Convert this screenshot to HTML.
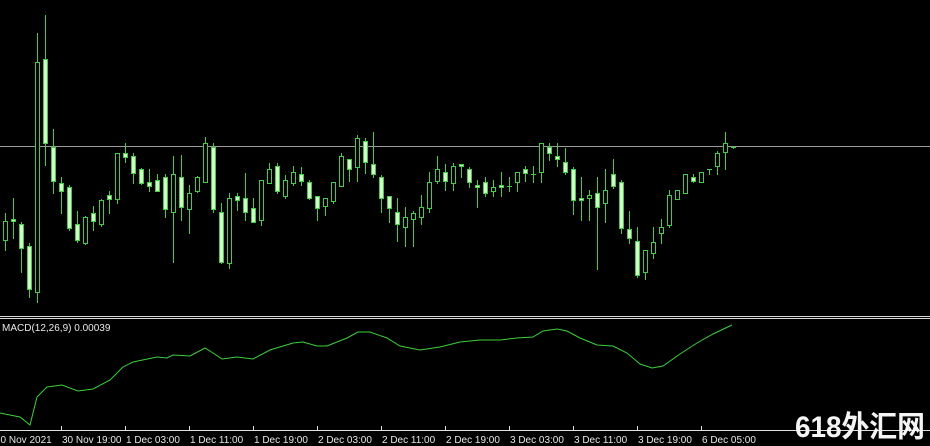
<!DOCTYPE html>
<html><head><meta charset="utf-8"><style>
html,body{margin:0;padding:0;background:#000;width:930px;height:446px;overflow:hidden}
svg{display:block}
.t{font-family:"Liberation Sans",sans-serif;font-size:10px;fill:#e8e8e8}
.wm{font-family:"Liberation Sans","Noto Sans CJK SC",sans-serif;font-size:30px;font-weight:bold;fill:#f4f4f4}
</style></head><body>
<svg id="s" width="930" height="446" viewBox="0 0 930 446" xmlns="http://www.w3.org/2000/svg" shape-rendering="crispEdges">
<rect width="930" height="446" fill="#000"/>
<line x1="0" y1="146.5" x2="930" y2="146.5" stroke="#9a9a9a"/>
<g id="c"></g>
<line x1="0" y1="316.5" x2="930" y2="316.5" stroke="#d8d8d8"/>
<line x1="0" y1="318.5" x2="930" y2="318.5" stroke="#d8d8d8"/>
<text class="t" x="2" y="331">MACD(12,26,9) 0.00039</text>
<polyline shape-rendering="auto" fill="none" stroke="#3ccf3c" stroke-width="1" points="0,413 20,417 30,425 37,397 47,387 62,385 78,391 93,389 110,380 123,367 133,362 157,357 167,358 173,355 190,356 205,348 213,353 222,359 237,357 253,359 270,350 293,343 303,342 317,346 327,346 347,338 358,332 370,332 387,338 400,346 420,350 440,347 460,342 480,340 500,340 517,338 533,337 543,331 557,329 567,331 580,338 597,345 613,346 627,353 640,364 652,368 663,366 680,354 697,343 713,334 732,325"/>
<line x1="0" y1="430.5" x2="930" y2="430.5" stroke="#e0e0e0"/>
<g stroke="#e0e0e0">
<line x1="61.5" y1="426" x2="61.5" y2="431"/><line x1="125.5" y1="426" x2="125.5" y2="431"/><line x1="189.5" y1="426" x2="189.5" y2="431"/><line x1="253.5" y1="426" x2="253.5" y2="431"/><line x1="317.5" y1="426" x2="317.5" y2="431"/><line x1="381.5" y1="426" x2="381.5" y2="431"/><line x1="445.5" y1="426" x2="445.5" y2="431"/><line x1="509.5" y1="426" x2="509.5" y2="431"/><line x1="573.5" y1="426" x2="573.5" y2="431"/><line x1="637.5" y1="426" x2="637.5" y2="431"/><line x1="701.5" y1="426" x2="701.5" y2="431"/>
</g>
<g class="t">
<text x="-5" y="443">30 Nov 2021</text>
<text x="62" y="443">30 Nov 19:00</text>
<text x="126" y="443">1 Dec 03:00</text>
<text x="190" y="443">1 Dec 11:00</text>
<text x="254" y="443">1 Dec 19:00</text>
<text x="318" y="443">2 Dec 03:00</text>
<text x="382" y="443">2 Dec 11:00</text>
<text x="446" y="443">2 Dec 19:00</text>
<text x="510" y="443">3 Dec 03:00</text>
<text x="574" y="443">3 Dec 11:00</text>
<text x="638" y="443">3 Dec 19:00</text>
<text x="702" y="443">6 Dec 05:00</text>
</g>
<text class="wm" x="795" y="437" textLength="130" lengthAdjust="spacingAndGlyphs">618外汇网</text>
</svg>
<script>
var d=[
[221,240,213,250,'u'],[219,221,198,238,'d'],[224,248,222,272,'d'],[246,289,243,297,'d'],[62,292,33,302,'u'],[59,143,15,165,'d'],[147,181,129,193,'d'],[183,191,177,213,'d'],[187,228,185,230,'d'],[224,240,211,242,'d'],
[217,243,216,244,'u'],[213,221,206,230,'d'],[200,224,199,226,'u'],[195,199,191,213,'d'],[153,199,153,203,'u'],[153,157,143,162,'d'],[156,173,153,183,'d'],[169,183,168,184,'d'],[182,186,169,191,'d'],[180,191,174,191,'d'],
[177,209,174,217,'d'],[174,212,156,262,'u'],[177,207,155,220,'d'],[193,209,185,233,'u'],[177,191,176,192,'u'],[143,182,137,182,'u'],[147,209,143,212,'d'],[212,262,203,263,'d'],[198,263,193,268,'u'],[196,200,193,210,'d'],
[198,212,173,220,'d'],[208,222,198,222,'d'],[180,220,180,225,'u'],[169,183,163,183,'u'],[166,191,163,193,'d'],[180,196,175,198,'u'],[172,183,166,185,'u'],[174,181,167,185,'d'],[182,198,180,199,'d'],[196,208,196,220,'d'],
[198,206,198,215,'u'],[182,201,182,203,'u'],[156,186,153,186,'u'],[159,169,159,181,'d'],[138,167,135,181,'u'],[141,162,138,173,'d'],[164,174,132,177,'d'],[177,198,175,212,'d'],[196,208,196,222,'d'],[212,224,198,241,'d'],
[217,227,207,246,'u'],[213,219,211,246,'u'],[207,217,195,224,'u'],[182,208,172,212,'u'],[169,181,156,183,'u'],[172,181,164,190,'d'],[166,183,163,190,'u'],[164,166,164,177,'d'],[169,182,167,187,'d'],[185,187,180,207,'d'],
[182,193,177,196,'d'],[187,191,180,196,'u'],[185,187,172,196,'d'],[186,186,177,191,'o'],[172,182,172,191,'u'],[169,173,166,181,'d'],[174,174,166,182,'o'],[143,172,143,182,'u'],[147,153,143,160,'d'],[156,159,143,166,'d'],
[162,172,148,174,'d'],[169,200,167,214,'d'],[198,200,177,220,'d'],[195,198,190,220,'u'],[193,207,177,269,'d'],[190,203,169,222,'u'],[174,186,159,188,'d'],[182,228,180,233,'d'],[229,238,211,243,'d'],[241,275,227,277,'d'],
[250,272,250,279,'u'],[242,253,227,258,'u'],[227,233,219,243,'u'],[195,225,190,227,'u'],[190,199,190,199,'u'],[174,193,174,193,'u'],[177,181,174,182,'d'],[172,182,172,182,'u'],[169,169,169,174,'o'],[153,166,151,174,'u'],
[143,152,132,169,'u'],[147,147,146,148,'o']];
var g=document.getElementById('c'),h='',G='#3fd03f',F='#d4f7cc';
d.forEach(function(a,i){var x=5+8*i,t=a[0],b=a[1],hi=a[2],lo=a[3],k=a[4];
h+='<line x1="'+(x+.5)+'" y1="'+hi+'" x2="'+(x+.5)+'" y2="'+(lo+1)+'" stroke="'+G+'"/>';
if(k=='o'){h+='<line x1="'+(x-2)+'" y1="'+(t+.5)+'" x2="'+(x+3)+'" y2="'+(t+.5)+'" stroke="'+G+'"/>';}
else{var hh=Math.max(b-t,2);h+='<rect x="'+(x-1.5)+'" y="'+(t+.5)+'" width="4" height="'+hh+'" fill="'+(k=='d'?F:'#000')+'" stroke="'+G+'"/>';}
});
g.innerHTML=h;
</script>
</body></html>
